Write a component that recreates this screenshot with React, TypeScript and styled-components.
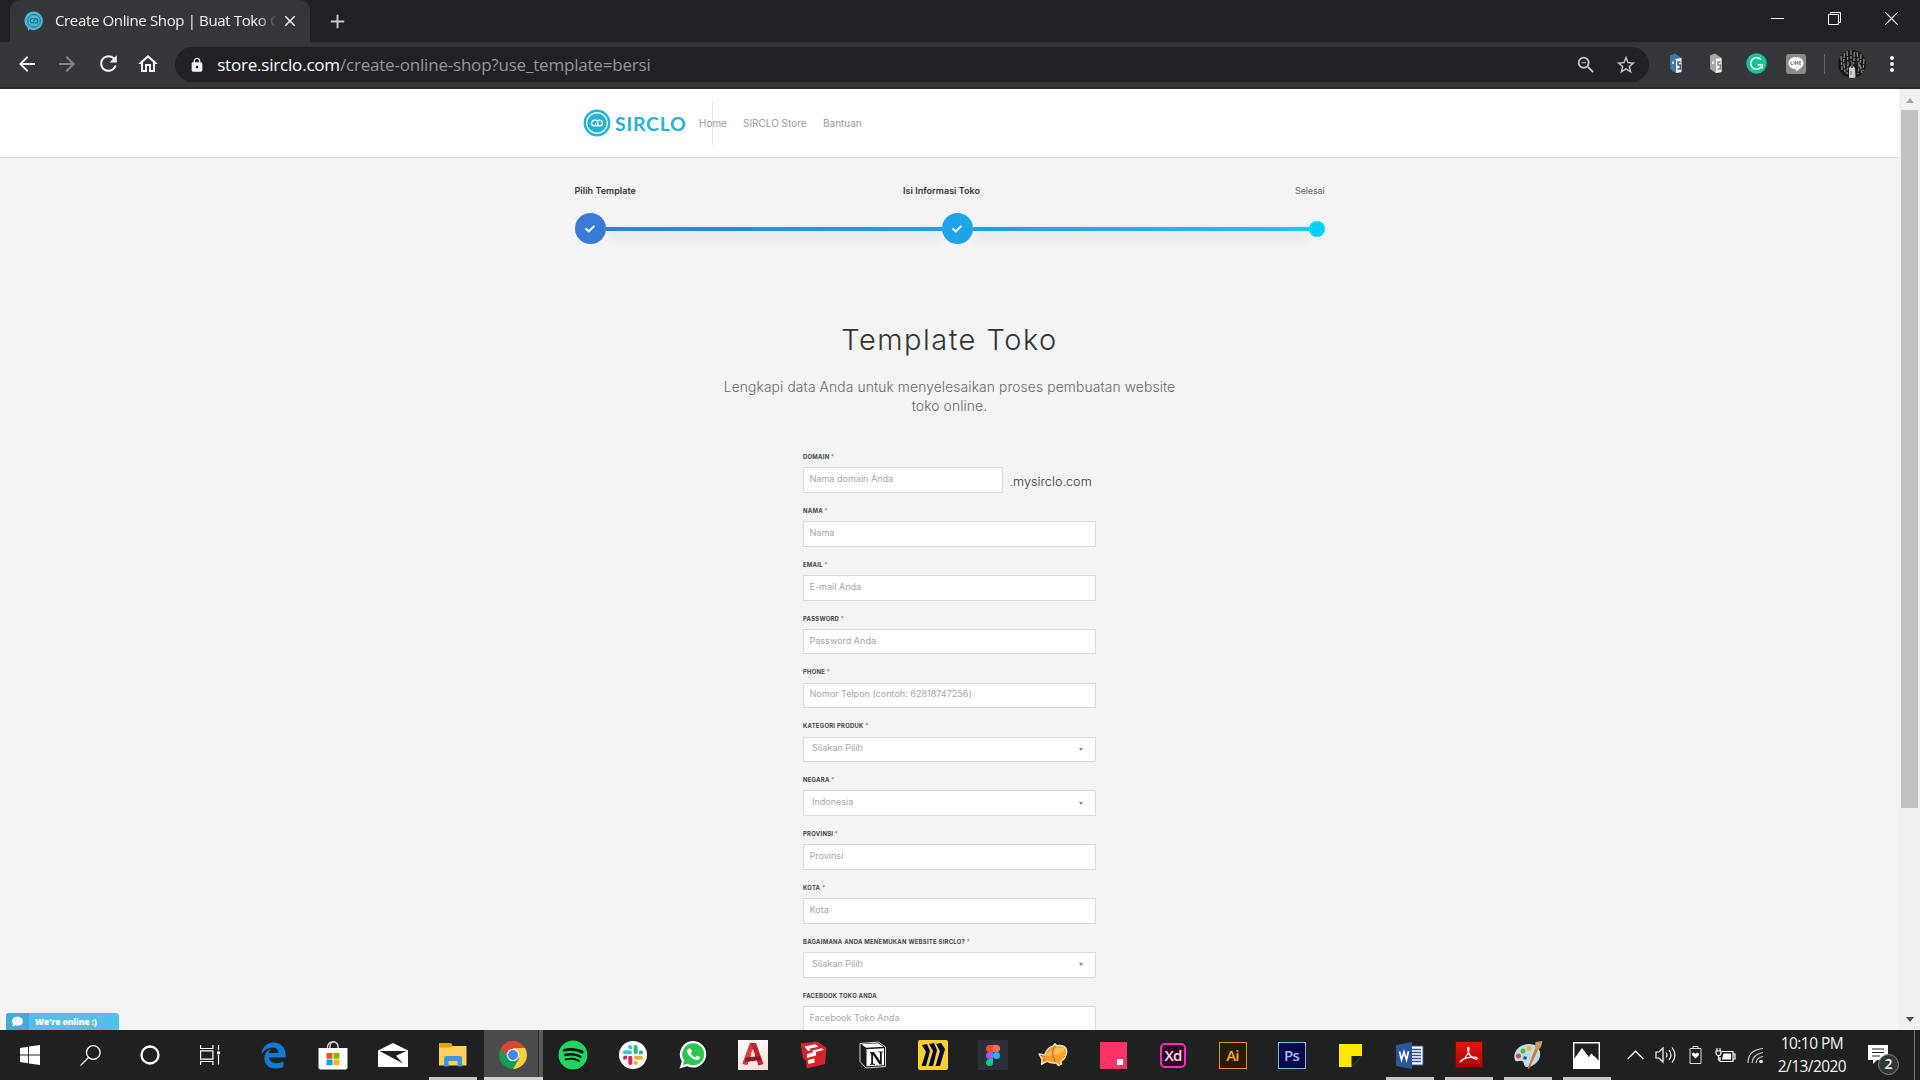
import React from "react";
import styled, { createGlobalStyle, css } from "styled-components";
import { MdArrowBack, MdArrowForward, MdRefresh, MdOutlineHome, MdLock, MdStarBorder, MdOutlineZoomOut, MdClose, MdAdd, MdMoreVert } from "react-icons/md";
import { FaEdgeLegacy, FaSpotify, FaCheck, FaComment } from "react-icons/fa";

const GlobalStyle = createGlobalStyle`
  * { box-sizing: border-box; }
  html, body { margin: 0; padding: 0; overflow: hidden; background: #f3f4f6; }
  svg { display: block; flex: none; }
`;

const pageFont = `Inter, "Liberation Sans", sans-serif`;
const systemFont = `"Open Sans", "Noto Sans", sans-serif`;

const Desktop = styled.div`
  width: 1920px;
  height: 1080px;
  display: flex;
  flex-direction: column;
  overflow: hidden;
  font-family: ${pageFont};
`;

/* ---------- browser chrome ---------- */

const TabStrip = styled.div`
  height: 42px;
  flex: none;
  display: flex;
  background: #202124;
  font-family: ${systemFont};
  padding-left: 10px;
`;

const Tab = styled.div`
  width: 300px;
  height: 42px;
  display: flex;
  align-items: center;
  padding: 0 10px 0 14px;
  border-radius: 10px 10px 0 0;
  background: #35363a;
`;

const TabTitle = styled.div`
  width: 224px;
  margin-left: 11px;
  white-space: nowrap;
  font-size: 15px;
  line-height: 22px;
  letter-spacing: -0.36px;
  color: #f1f3f4;
  margin-top: -2px;
  mask-image: linear-gradient(90deg, #000 202px, transparent 222px);
`;

const TabClose = styled.div`
  margin-left: 2px;
  margin-top: -1px;
  color: #f4f4f4;
`;

const NewTab = styled.div`
  display: flex;
  align-items: center;
  margin-left: 16px;
  color: #c8cacd;
`;

const WindowButtons = styled.div`
  margin-left: auto;
  display: flex;
`;

const WindowButton = styled.div`
  width: 57px;
  height: 37px;
  display: flex;
  align-items: center;
  justify-content: center;
`;

const Toolbar = styled.div`
  height: 47px;
  flex: none;
  display: flex;
  align-items: center;
  background: #35363a;
  border-bottom: 2px solid #28292c;
  padding: 0 16px 2px 15px;
  font-family: ${systemFont};
`;

const NavButton = styled.div<{ $dim?: boolean }>`
  width: 40.3px;
  display: flex;
  color: ${(p) => (p.$dim ? "#85868a" : "#f1f3f4")};
`;

const Omnibox = styled.div`
  width: 1474px;
  height: 35px;
  margin-top: 2px;
  display: flex;
  align-items: center;
  border-radius: 18px;
  background: #202124;
  padding: 0 12px 0 14px;
  margin-left: -1px;
  color: #f1f3f4;
`;

const Url = styled.div`
  margin-left: 12px;
  flex: 1;
  font-size: 17px;
  line-height: 24px;
  letter-spacing: -0.2px;
  white-space: nowrap;
  color: #fff;
  span { color: #94979b; }
`;

const OmniIcons = styled.div`
  display: flex;
  gap: 18px;
  color: #c3c5c9;
`;

const Extensions = styled.div`
  display: flex;
  align-items: center;
  margin-left: 7px;
`;

const ExtSlot = styled.div`
  width: 40px;
  display: flex;
  justify-content: center;
`;

const LineBadge = styled.div`
  width: 20px;
  height: 20px;
  border-radius: 3px;
  background: #8b8b8b;
`;

const ToolbarRule = styled.div`
  width: 1px;
  height: 20px;
  margin: 0 13px 0 8px;
  background: #66676b;
`;

const ToolbarMenu = styled.div`
  margin-left: 14px;
  color: #f1f3f4;
`;

/* ---------- page ---------- */

const Viewport = styled.div`
  height: 941px;
  flex: none;
  display: flex;
  overflow: hidden;
  position: relative;
`;

const Page = styled.div`
  width: 1899px;
  background: #f3f4f6;
  overflow: hidden;
`;

const SiteHeader = styled.header`
  height: 69px;
  background: #fff;
  border-bottom: 1px solid #d9dbdd;
  display: flex;
  align-items: center;
  padding-left: 583px;
`;

const Wordmark = styled.div`
  width: 84px;
  margin: 1px 0 0 4px;
  font-family: Lato, sans-serif;
  font-weight: 700;
  font-size: 19.5px;
  line-height: 24px;
  letter-spacing: 0.75px;
  color: #27b2d2;
  white-space: nowrap;
`;

const SiteNav = styled.nav`
  position: relative;
  display: flex;
  align-items: center;
  height: 43px;
`;

const NavRule = styled.div`
  position: absolute;
  left: 13px;
  top: 0;
  width: 1px;
  height: 43px;
  background: #e4e4e4;
`;

const NavLink = styled.a<{ $width: number }>`
  width: ${(p) => p.$width}px;
  position: relative;
  font-size: 9.9px;
  line-height: 12px;
  letter-spacing: 0.06px;
  color: #999;
  white-space: nowrap;
`;

const Steps = styled.section`
  width: 750px;
  margin-left: 574.5px;
  padding-top: 27px;
`;

const StepLabels = styled.div`
  display: flex;
  justify-content: space-between;
  height: 12px;
  line-height: 12px;
  font-size: 9px;
  color: #555;
`;

const StepLabel = styled.span<{ $active?: boolean; $shift?: number }>`
  font-weight: ${(p) => (p.$active ? 600 : 400)};
  color: ${(p) => (p.$active ? "#333" : "#666")};
  letter-spacing: ${(p) => (p.$active ? "0.04px" : "-0.15px")};
  margin-left: ${(p) => p.$shift || 0}px;
`;

const StepTrack = styled.div`
  display: flex;
  align-items: center;
  height: 31px;
  margin-top: 16px;
`;

const StepDot = styled.div<{ $size: number; $color: string }>`
  width: ${(p) => p.$size}px;
  height: ${(p) => p.$size}px;
  flex: none;
  display: flex;
  align-items: center;
  justify-content: center;
  border-radius: 50%;
  background: ${(p) => p.$color};
  color: #fff;
`;

const StepLine = styled.div<{ $from: string; $to: string }>`
  flex: 1;
  height: 4px;
  background: linear-gradient(90deg, ${(p) => p.$from}, ${(p) => p.$to});
  box-shadow: 0 5px 12px rgba(0, 0, 0, 0.14);
`;

const Intro = styled.section`
  width: 480px;
  margin: 77px auto 0;
  text-align: center;
`;

const Title = styled.h1`
  margin: 0;
  font-weight: 300;
  font-size: 29px;
  line-height: 38px;
  letter-spacing: 1.5px;
  color: #333;
`;

const Subtitle = styled.p`
  margin: 19px 0 0;
  font-weight: 300;
  font-size: 13.8px;
  line-height: 19px;
  letter-spacing: 0.13px;
  color: #666;
`;

const Form = styled.form`
  width: 293px;
  margin: 37px 0 0 803px;
`;

const Field = styled.div`
  height: 53.87px;
`;

const FieldLabel = styled.label`
  display: block;
  height: 14.3px;
  line-height: 8px;
  font-size: 5.9px;
  font-weight: 700;
  letter-spacing: 0.27px;
  color: #444;
  white-space: nowrap;
  em { font-style: normal; color: #f2506a; }
`;

const FieldRow = styled.div`
  display: flex;
  align-items: center;
`;

const Control = styled.div<{ $width?: number; $select?: boolean }>`
  width: ${(p) => p.$width || 293}px;
  height: 25.5px;
  display: flex;
  align-items: center;
  justify-content: space-between;
  border: 1px solid #d8dadc;
  background: #fff;
  padding: 0 12px 2px ${(p) => (p.$select ? 8 : 5.5)}px;
  font-size: 9.1px;
  line-height: 12px;
  letter-spacing: -0.03px;
  color: #a6a6a6;
  white-space: nowrap;
`;

const Caret = styled.i`
  border: 2.5px solid transparent;
  border-top: 3px solid #888;
  border-bottom: 0;
  margin-top: 2px;
`;

const DomainSuffix = styled.span`
  margin: 4px 0 0 6.5px;
  font-weight: 300;
  font-size: 12.7px;
  line-height: 16px;
  color: #333;
`;

const Scrollbar = styled.div`
  width: 21px;
  display: flex;
  flex-direction: column;
  align-items: center;
  background: #f1f1f1;
`;

const ScrollArrow = styled.div<{ $down?: boolean }>`
  height: 21px;
  display: flex;
  align-items: center;
  &::after {
    content: "";
    border: 4.5px solid transparent;
    ${(p) =>
      p.$down
        ? css`border-top: 5px solid #505050; border-bottom: 0;`
        : css`border-bottom: 5px solid #a3a3a3; border-top: 0; margin-top: 2px;`}
  }
`;

const ScrollThumb = styled.div`
  width: 17px;
  height: 698px;
  margin-bottom: auto;
  background: #c1c1c1;
`;

const Chat = styled.div`
  position: absolute;
  left: 6px;
  bottom: 0;
  width: 113px;
  height: 17px;
  display: flex;
  align-items: center;
  overflow: hidden;
  border-radius: 3px 3px 0 0;
  background: #52c0e6;
  color: #fff;
  font-family: ${systemFont};
  font-weight: 800;
  font-size: 8.6px;
  letter-spacing: -0.15px;
`;

const ChatIcon = styled.div`
  width: 23px;
  height: 17px;
  margin-right: 6px;
  display: flex;
  align-items: center;
  justify-content: center;
  background: #3eaed3;
`;

/* ---------- taskbar ---------- */

const Taskbar = styled.div`
  height: 50px;
  flex: none;
  display: flex;
  background: #1f2020;
  color: #fff;
  font-family: ${systemFont};
`;

const StartGroup = styled.div`
  display: flex;
  margin-right: 3px;
`;

const TaskCell = styled.div<{ $width?: number; $running?: boolean; $active?: boolean }>`
  width: ${(p) => p.$width || 60}px;
  height: 50px;
  display: flex;
  align-items: center;
  justify-content: center;
  ${(p) => p.$running && css`background: linear-gradient(#cdc3c3, #cdc3c3) center bottom / 48px 3px no-repeat;`}
  ${(p) =>
    p.$active &&
    css`
      padding-right: 1px;
      background: linear-gradient(#d8cccc, #d8cccc) 1px bottom / 59px 3px no-repeat,
        linear-gradient(90deg, #1f2020 1px, #4b4b4b 1px, #4b4b4b 55px, #2c2c2c 55px, #2c2c2c 56px, #5a5a5a 56px);
    `}
`;

const AdobeTile = styled.div<{ $fg: string; $bg: string; $line: string; $round?: boolean }>`
  width: ${(p) => (p.$round ? 26 : 28)}px;
  height: ${(p) => (p.$round ? 25 : 27)}px;
  border: ${(p) => (p.$round ? 2 : 1.5)}px solid ${(p) => p.$line};
  border-radius: ${(p) => (p.$round ? 5 : 0)}px;
  background: ${(p) => p.$bg};
  color: ${(p) => p.$fg};
  display: flex;
  align-items: center;
  justify-content: center;
  font-weight: 600;
  font-size: 15px;
  line-height: 20px;
  letter-spacing: -0.8px;
  padding-bottom: 1px;
`;

const CadTile = styled.div`
  width: 30px;
  height: 30px;
  background: linear-gradient(160deg, #fff, #f7ddd6);
`;

const MiroTile = styled.div`
  width: 30px;
  height: 30px;
  border-radius: 2px;
  background: #fdd02f;
`;

const FigmaTile = styled.div`
  width: 30px;
  height: 30px;
  display: flex;
  align-items: center;
  justify-content: center;
  background: #2c2f38;
`;

const InvisionTile = styled.div`
  width: 27px;
  height: 27px;
  display: flex;
  align-items: flex-end;
  justify-content: flex-end;
  padding: 4px;
  background: #ff3366;
  &::after { content: ""; width: 6px; height: 6px; background: #fff; }
`;

const Disc = styled.div<{ $size: number; $bg: string }>`
  width: ${(p) => p.$size}px;
  height: ${(p) => p.$size}px;
  display: flex;
  align-items: center;
  justify-content: center;
  border-radius: 50%;
  background: ${(p) => p.$bg};
`;

const EdgeColor = styled.div`
  color: #0f7bd8;
`;

const Tray = styled.div`
  display: flex;
  align-items: center;
  margin-left: 4px;
`;

const TrayCell = styled.div`
  width: 30.2px;
  display: flex;
  justify-content: center;
`;

const Clock = styled.div`
  width: 80px;
  margin-left: 1px;
  text-align: center;
  font-size: 15.5px;
  line-height: 23px;
  letter-spacing: -0.55px;
  white-space: nowrap;
  color: #f4f4f4;
`;

const Notifications = styled.div`
  position: relative;
  width: 40px;
  height: 50px;
  margin-left: 16px;
`;

const NoteIcon = styled.div`
  padding-top: 14px;
`;

const NoteBadge = styled.div`
  position: absolute;
  left: 10px;
  top: 24px;
  width: 21px;
  height: 21px;
  border: 1px solid #888;
  border-radius: 50%;
  background: #333536;
  text-align: center;
  font-size: 14px;
  font-weight: 600;
  line-height: 18px;
`;

const ShowDesktop = styled.div`
  width: 6px;
  height: 50px;
  margin-left: auto;
  border-left: 1px solid #777;
`;

const Favicon = () => (
  <svg width="20" height="20" viewBox="0 0 20 20">
    <path d="M10 0.5a9.3 9.3 0 1 1-4.2 17.8L4 20l-.3-3.2A9.3 9.3 0 0 1 10 .5z" fill="#4bb6d6" />
    <circle cx="10" cy="9.8" r="6.3" fill="none" stroke="#28708a" strokeWidth="1" />
    <path d="M9.300 7.500H8.500a2 2 0 0 0 0 4.500q1.500 0 1.500-2.200t1.500-2.200a2 2 0 0 1 0 4.500h-.8" fill="none" stroke="#1f667f" strokeWidth="1.100" />
  </svg>
);

const BuildingIcon = ({ side, mark }: { side: string; mark: string }) => (
  <svg width="14" height="21" viewBox="0 0 14 21">
    <path d="M1 2.500L6 .5l6.500 4.500v14L7 20l-5.500-4z" fill={side} />
    <path d="M3.500 6.500L12.500 5v14L7.500 20 3.500 16z" fill="#f2f2f2" />
    <path d="M1 2.500l6 4.300V20l-5.500-4z" fill={side} />
    <path d="M11.500 9H9v3h2.300v4H8.500" stroke={mark} strokeWidth="1.400" fill="none" />
    <path d="M4 8.500v2.500" stroke="#fff" strokeWidth="1.500" />
  </svg>
);

const GrammarlyIcon = () => (
  <svg width="21" height="21" viewBox="0 0 21 21">
    <circle cx="10.5" cy="10.5" r="10.300" fill="#15c39a" />
    <path d="M15 6.700A5.800 5.800 0 1 0 15.300 13.800M16.300 15.500v-3.700h-4.500" fill="none" stroke="#fff" strokeWidth="1.600" />
  </svg>
);

const LineIcon = () => (
  <svg width="20" height="20" viewBox="0 0 20 20">
    <path d="M10 3c4.300 0 7.500 2.700 7.500 6.200 0 3.200-4 6-7.500 8.300v-2.300C5.800 15 2.500 12.500 2.500 9.200 2.500 5.700 5.700 3 10 3z" fill="#fff" />
    <path d="M5 7.300v3.200h1.800M8 7v3.700M9.500 10.700V7.400l2 3V7M15 7.500h-1.900v3.100H15M13 9h2" fill="none" stroke="#777" strokeWidth=".9" />
  </svg>
);

const Avatar = () => (
  <svg width="28" height="28" viewBox="0 0 28 28">
    <clipPath id="avatarClip"><circle cx="14" cy="14" r="14" /></clipPath>
    <g clipPath="url(#avatarClip)">
      <rect width="28" height="28" fill="#191919" />
      <path d="M3 6l1 14M6.500 3l-1 9 2 12M9 1l1 13-1 10M13 0v12M16.500 2l-1 12M19 2l2 14-1 8M23 4l-1 11 2 8M26 9l-1 12" stroke="#858585" strokeWidth="1.300" strokeDasharray="5 1 3 1.500" fill="none" />
      <path d="M11 18l3-3 3 3 .5 10h-6.500z" fill="#cfcfcf" />
      <path d="M14 12v6" stroke="#555" strokeWidth="2" />
      <path d="M13 21v4" stroke="#777" strokeWidth="1" />
    </g>
  </svg>
);

const SircloLogo = () => (
  <svg width="28" height="28" viewBox="0 0 28 28">
    <circle cx="14" cy="14" r="13.400" fill="#27b2d2" />
    <circle cx="14" cy="14" r="10.300" fill="none" stroke="#e3f8fb" strokeWidth="1.400" />
    <path d="M12.500 16.900h-1a2.900 2.900 0 0 1 0-5.800h1.500q1.700 0 1.700 2v1.500q0 2.300 1.800 2.300a2.900 2.900 0 0 0 0-5.800h-1.500" fill="none" stroke="#fff" strokeWidth="1.400" />
    <path d="M15.300 16.900h-1.300q-1.500 0-1.500-2v-1" fill="none" stroke="#fff" strokeWidth="1.100" />
  </svg>
);

const StartIcon = () => (
  <svg width="20" height="20" viewBox="0 0 20 20" fill="#fff">
    <path d="M0 2.900l8.100-1.200v7.800H0zM9 1.500L20 0v9.500H9zM0 10.500h8.100v7.800L0 17.100zM9 10.500h11V20L9 18.500z" />
  </svg>
);

const SearchIcon = () => (
  <svg width="21" height="21" viewBox="0 0 21 21" fill="none" stroke="#fff" strokeWidth="1.300">
    <circle cx="13.300" cy="7.500" r="6.800" />
    <path d="M8.500 12.500L.5 20.500" />
  </svg>
);

const CortanaIcon = () => (
  <svg width="20" height="20" viewBox="0 0 20 20">
    <circle cx="10" cy="10" r="8.500" fill="none" stroke="#fff" strokeWidth="2.300" />
  </svg>
);

const TaskViewIcon = () => (
  <svg width="21" height="20" viewBox="0 0 21 20" fill="none" stroke="#fff" strokeWidth="1.200">
    <path d="M.6 0v3.500h12.300V0M.6 5.800h12.300v8.400H.6zM.6 20v-3.500h12.300V20M18.500 0v5M18.500 10v9.500" />
    <rect x="17" y="6.300" width="3" height="3" fill="#fff" stroke="none" />
  </svg>
);

const StoreIcon = () => (
  <svg width="30" height="30" viewBox="0 0 30 30">
    <path d="M9.500 9V7a5.300 5.300 0 0 1 10.600 0v2M12 8V6a4 4 0 0 1 8 0" fill="none" stroke="#d0d0d0" strokeWidth="1.400" />
    <path d="M.5 8h29v20l-1.500 1.500h-26L.5 28z" fill="#fff" />
    <path d="M8.500 13h6v5.700h-6z" fill="#f25022" />
    <path d="M15.500 13h6v5.700h-6z" fill="#7fba00" />
    <path d="M8.500 19.500h6v5.700h-6z" fill="#00a4ef" />
    <path d="M15.500 19.500h6v5.700h-6z" fill="#ffb900" />
  </svg>
);

const MailIcon = () => (
  <svg width="30" height="24" viewBox="0 0 30 24">
    <path d="M0 7.500L15 0l15 7.500V24H0z" fill="#fff" />
    <path d="M1.500 8h27L18 12.800l7 7.700L1.500 8z" fill="#1f2020" />
  </svg>
);

const ExplorerIcon = () => (
  <svg width="28" height="24" viewBox="0 0 28 24">
    <path d="M0 1h11l2 2h14.500v19.500H0z" fill="#fbd15b" />
    <path d="M0 0h12l1.500 2L12 4.500H0z" fill="#e39c1c" />
    <path d="M5 23.500v-8q0-2.500 2.500-2.500h13q2.500 0 2.500 2.500v8h-4.500V18h-9v5.500z" fill="#3d95dd" />
  </svg>
);

const ChromeIcon = () => (
  <svg width="28" height="28" viewBox="0 0 28 28">
    <path d="M14 14L1.900 7A14 14 0 0 1 26.100 7z" fill="#db4437" />
    <path d="M14 14L1.900 7A14 14 0 0 0 14 28l6.100-10.500z" fill="#0f9d58" />
    <path d="M20.100 17.500L14 28A14 14 0 0 0 26.100 7H14z" fill="#ffcd40" />
    <path d="M1.900 7A14 14 0 0 1 26.100 7H14a7 7 0 0 0-6.500 4.500L7.900 17.500z" fill="#db4437" />
    <circle cx="14" cy="14" r="6.300" fill="#f1f1f1" />
    <circle cx="14" cy="14" r="5" fill="#4285f4" />
  </svg>
);

const SlackIcon = () => (
  <svg width="20" height="20" viewBox="0 0 20 20">
    <g fill="#36c5f0"><rect x="0" y="5.300" width="9" height="4" rx="2" /><path d="M9 4H7a2 2 0 1 1 2-2z" /></g>
    <g fill="#2eb67d"><rect x="10.700" y="0" width="4" height="9.300" rx="2" /><path d="M16 9.300v-2a2 2 0 1 1 2 2z" /></g>
    <g fill="#ecb22e"><rect x="11" y="10.700" width="9" height="4" rx="2" /><path d="M11 16h2a2 2 0 1 1-2 2z" /></g>
    <g fill="#e01e5a"><rect x="5.300" y="10.700" width="4" height="9.300" rx="2" /><path d="M4 10.700v2a2 2 0 1 1-2-2z" /></g>
  </svg>
);

const WhatsappLogo = () => (
  <svg width="28" height="28" viewBox="0 0 28 28">
    <path d="M14.500 0A13.300 13.300 0 1 1 8 25.200L.5 27.500l2.300-7.300A13.300 13.300 0 0 1 14.500 0z" fill="#fff" />
    <path d="M14.500 2.300A11 11 0 1 1 8.500 22.700l-4.700 1.400 1.500-4.500A11 11 0 0 1 14.500 2.300z" fill="#2cc64f" />
    <path d="M10.300 7.500l1.500.2 1.200 3-1.200 1.700a9 9 0 0 0 4.500 4l1.600-1.900 3 1.400c.3 2-1.400 3.200-2.900 3.200-4.500-.5-9.500-5-10-9 0-1.200.9-2.500 2.300-2.600z" fill="#fff" />
  </svg>
);

const CadIcon = () => (
  <svg width="30" height="30" viewBox="0 0 30 30">
    <path d="M12 3h6l7.500 21-5 1.500L15 10 9 25l-4.500-1.300z" fill="#b9252b" />
    <path d="M12 3l3 7-6 15-4.500-1.300z" fill="#d5434a" />
    <path d="M8 17.500l14-1.500 1.500 4L6.500 22z" fill="#8e1a20" />
    <path d="M12.700 14l2.300-5 2 5.500z" fill="#f6ddd8" />
  </svg>
);

const SketchupIcon = () => (
  <svg width="27" height="28" viewBox="0 0 27 28">
    <path d="M.5 2.500L17.500.5l9 6.500-1.500 16L6.500 27.500 6 19.500l-3-2z" fill="#d8232a" />
    <path d="M4.500 5.500L15 3.300l3.500 2.500-9.500 2 2 1.500-3 .7z" fill="#fff" />
    <path d="M12.500 9.500l9-2.300 2.500 1.600-8 2.200 0 3.500-3.500 1-5.500 1.300V13l5.500-1.500z" fill="#fff" />
    <path d="M8 19l6.500-1.500v4L8.500 23z" fill="#fff" />
  </svg>
);

const NotionIcon = () => (
  <svg width="28" height="28" viewBox="0 0 28 28">
    <path d="M1 2.500L19.500 1l7 5v19.500L7 27 1 20.500z" fill="#191919" stroke="#d8d8d8" strokeWidth="1" />
    <path d="M2.500 3.300L19 2.200l5.500 3.500L7 6.800z" fill="#fff" />
    <path d="M7.500 8.300l17.500-1.100v17L7.500 25.300z" fill="#fff" />
    <path d="M11 11h4l6 9v-8.500l-1.800-.3V10.500h5v.8l-1.400.3v12h-2.300L14 13.800v8.700l2 .5v.7h-5v-.7l1.200-.5v-10L11 12z" fill="#151515" />
  </svg>
);

const MiroIcon = () => (
  <svg width="30" height="30" viewBox="0 0 30 30" fill="#06053b">
    <path d="M4 5l5-1 3 7-4 15H3.500L8 12zM11 4l5-1 3 7-4 16h-4.500L15 11zM18 4l5-1 4 6-5 17h-4.500L22 11z" />
  </svg>
);

const FigmaIcon = () => (
  <svg width="14" height="21" viewBox="0 0 14 21">
    <path d="M7 0H3.500a3.500 3.500 0 0 0 0 7H7z" fill="#f24e1e" />
    <path d="M7 0h3.500a3.500 3.500 0 0 1 0 7H7z" fill="#ff7262" />
    <path d="M7 7H3.500a3.500 3.500 0 0 0 0 7H7z" fill="#a259ff" />
    <circle cx="10.500" cy="10.500" r="3.500" fill="#1abcfe" />
    <path d="M7 14H3.500A3.500 3.500 0 1 0 7 17.500z" fill="#0acf83" />
  </svg>
);

const ZeplinIcon = () => (
  <svg width="30" height="24" viewBox="0 0 30 24">
    <path d="M1 11l5.500 1C9 6 13 3.500 15 3.200L17 .7l1.500 2C24 1.500 29 3.500 28.700 9c-.5 6-4 8.500-6 9.500l1 2.500-3.200 1.500-2.500-2.500c-4 .5-7-.5-9-1.700L3.500 21.500l.5-5z" fill="#f9a12b" stroke="#fbeedf" strokeWidth="1.300" strokeLinejoin="round" />
    <path d="M8 12.500C13 5.500 20 3.500 27.300 5c-3 5.500-10 8.500-19.300 7.500z" fill="#ffc154" />
    <path d="M16.500 3.500q-4 7 1 15.500M2.500 12l4.500 1.500M5 18l3-1.500" stroke="#dd5f2c" strokeWidth="1.300" fill="none" />
  </svg>
);

const StickyIcon = () => (
  <svg width="23" height="23" viewBox="0 0 23 23">
    <path d="M0 0h23v12L12.500 23H0z" fill="#fee902" />
    <path d="M12.500 12H23L12.500 23z" fill="#1c1c14" />
  </svg>
);

const WordIcon = () => (
  <svg width="28" height="27" viewBox="0 0 28 27">
    <path d="M14 4h13v19H14z" fill="#fff" stroke="#2b579a" />
    <path d="M16 7.500h9M16 10.500h9M16 13.500h9M16 16.500h9M16 19.500h9" stroke="#2b579a" strokeWidth="1.300" />
    <path d="M0 3l16-3v27L0 24z" fill="#2b579a" />
    <path d="M3.500 9.500l2 8.300 2.500-8 2.500 8 2-8.500" fill="none" stroke="#fff" strokeWidth="1.700" />
  </svg>
);

const AcrobatIcon = () => (
  <svg width="28" height="28" viewBox="0 0 28 28">
    <defs><linearGradient id="pdf" x2="0" y2="1"><stop stopColor="#e8150f" /><stop offset="1" stopColor="#a70404" /></linearGradient></defs>
    <path d="M.5.5h27v26H.5z" fill="url(#pdf)" stroke="#6d0b08" />
    <path d="M6 20c3-1 7-6 8-11 .5-4-2-3-1.300 0C14 14 17 17 20 18c3 .5 3-1.500 0-1.800C15 16 10 17 6.500 19.200c-2 1.300-1.500 2.500 0 .8z" fill="none" stroke="#fff" strokeWidth="1.200" />
  </svg>
);

const PaintIcon = () => (
  <svg width="30" height="28" viewBox="0 0 30 28">
    <path d="M2 19C-1 12 6 3 16 3c8 0 12 5 11 12-1 6-7 11-13 11-4 0-2-5-5-6-2-1-6 2-7-1z" fill="#bcdcef" />
    <circle cx="5.500" cy="15" r="2.500" fill="#e2443e" />
    <circle cx="10" cy="10" r="2.500" fill="#54b848" />
    <circle cx="16" cy="7.500" r="2.500" fill="#f2b431" />
    <circle cx="12" cy="17" r="1.800" fill="#234a72" />
    <path d="M22 7.500l-7.500 20 1.500.5L25 9z" fill="#d9762b" />
    <path d="M22.500 1l7-1-1.500 6-3 3-3-1.500z" fill="#c99a67" />
  </svg>
);

const PhotosIcon = () => (
  <svg width="27" height="27" viewBox="0 0 27 27">
    <path d="M.7.700h25.600v25.600H.7z" fill="#1f2020" stroke="#fff" strokeWidth="1.400" />
    <path d="M1 17l8-11 7 9 2.500-4L26 19v7.500H1z" fill="#fff" />
    <path d="M15.500 14.500l2.500-4 3 3.500" fill="none" stroke="#222" strokeWidth=".8" />
  </svg>
);

const fields: { label: string; text: string; required?: boolean; select?: boolean; suffix?: string }[] = [
  { label: "DOMAIN", text: "Nama domain Anda", required: true, suffix: ".mysirclo.com" },
  { label: "NAMA", text: "Nama", required: true },
  { label: "EMAIL", text: "E-mail Anda", required: true },
  { label: "PASSWORD", text: "Password Anda", required: true },
  { label: "PHONE", text: "Nomor Telpon (contoh: 62818747256)", required: true },
  { label: "KATEGORI PRODUK", text: "Silakan Pilih", required: true, select: true },
  { label: "NEGARA", text: "Indonesia", required: true, select: true },
  { label: "PROVINSI", text: "Provinsi", required: true },
  { label: "KOTA", text: "Kota", required: true },
  { label: "BAGAIMANA ANDA MENEMUKAN WEBSITE SIRCLO?", text: "Silakan Pilih", required: true, select: true },
  { label: "FACEBOOK TOKO ANDA", text: "Facebook Toko Anda" },
];

const BrowserChrome = () => (
  <>
    <TabStrip>
      <Tab>
        <Favicon />
        <TabTitle>Create Online Shop | Buat Toko C</TabTitle>
        <TabClose><MdClose size={18} /></TabClose>
      </Tab>
      <NewTab><MdAdd size={23} /></NewTab>
      <WindowButtons>
        <WindowButton><svg width="13" height="2"><path d="M0 .5h13" stroke="#fff" /></svg></WindowButton>
        <WindowButton>
          <svg width="13" height="13" fill="none" stroke="#fff"><path d="M.5 2.500h10v10H.5zM2.500 2.500v-2h10v10h-2" /></svg>
        </WindowButton>
        <WindowButton>
          <svg width="13" height="13" stroke="#fff" strokeWidth="1.200"><path d="M0 0l13 13M13 0L0 13" /></svg>
        </WindowButton>
      </WindowButtons>
    </TabStrip>
    <Toolbar>
      <NavButton><MdArrowBack size={24} /></NavButton>
      <NavButton $dim><MdArrowForward size={24} /></NavButton>
      <NavButton><MdRefresh size={25} /></NavButton>
      <NavButton><MdOutlineHome size={24} /></NavButton>
      <Omnibox>
        <MdLock size={16} />
        <Url>store.sirclo.com<span>/create-online-shop?use_template=bersi</span></Url>
        <OmniIcons>
          <MdOutlineZoomOut size={22} />
          <MdStarBorder size={22} />
        </OmniIcons>
      </Omnibox>
      <Extensions>
        <ExtSlot><BuildingIcon side="#3e78b5" mark="#2f62a0" /></ExtSlot>
        <ExtSlot><BuildingIcon side="#a9a9a9" mark="#8a8a8a" /></ExtSlot>
        <ExtSlot><GrammarlyIcon /></ExtSlot>
        <ExtSlot><LineBadge><LineIcon /></LineBadge></ExtSlot>
      </Extensions>
      <ToolbarRule />
      <Avatar />
      <ToolbarMenu><MdMoreVert size={24} /></ToolbarMenu>
    </Toolbar>
  </>
);

const SystemTray = () => (
  <Tray>
    <TrayCell><svg width="17" height="10" fill="none" stroke="#fff" strokeWidth="1.300"><path d="M.7 9L8.500 1.200 16.300 9" /></svg></TrayCell>
    <TrayCell>
      <svg width="21" height="18" fill="none" stroke="#fff" strokeWidth="1.200">
        <path d="M1 6h3l4-4v14l-4-4H1zM11 6.500q2 2.500 0 5M14 4q4 5 0 10M17 1.500q6 7.500 0 15" />
      </svg>
    </TrayCell>
    <TrayCell>
      <svg width="13" height="18" fill="none" stroke="#ddd">
        <path d="M1 2.500h11v15H1zM4 2.500v-2h5v2" />
        <path d="M6.500 12.500L3 9q0-2.500 2-2.300l1.500 1 1.500-1q2-.2 2 2.300z" fill="#fff" stroke="none" />
      </svg>
    </TrayCell>
    <TrayCell>
      <svg width="21" height="15" fill="none" stroke="#fff" strokeWidth="1.200">
        <path d="M7 3.500h11v10H5V9M18.500 6h1.500v5h-1.500M1 3h5v2Q6 7.500 3.500 7.500 1 7.500 1 5zM2 3V0M5 3V0M3.500 7v5H5" />
        <path d="M8.500 5.500H16v6H7z" fill="#fff" stroke="none" />
      </svg>
    </TrayCell>
    <TrayCell>
      <svg width="17" height="17" fill="none" stroke="#ccc" strokeWidth="1.200">
        <path d="M1 16Q1 3 16 1.500M5 16Q6 7 16 5.500M9 16q.5-5.500 7-6.500" />
        <circle cx="14" cy="14.500" r="1.800" fill="#fff" stroke="none" />
      </svg>
    </TrayCell>
    <Clock>10:10 PM<br />2/13/2020</Clock>
    <Notifications>
      <NoteIcon>
        <svg width="21" height="20">
          <path d="M0 1h20v15H9l-4 4v-4H0z" fill="#fff" />
          <path d="M4 5h12M4 8.500h12M4 12h8" stroke="#222" strokeWidth="1.200" />
        </svg>
      </NoteIcon>
      <NoteBadge>2</NoteBadge>
    </Notifications>
  </Tray>
);

export default function App() {
  return (
    <Desktop>
      <GlobalStyle />
      <BrowserChrome />
      <Viewport>
        <Page>
          <SiteHeader>
            <SircloLogo />
            <Wordmark>SIRCLO</Wordmark>
            <SiteNav>
              <NavRule />
              <NavLink $width={44}>Home</NavLink>
              <NavLink $width={80}>SIRCLO Store</NavLink>
              <NavLink $width={50}>Bantuan</NavLink>
            </SiteNav>
          </SiteHeader>
          <Steps>
            <StepLabels>
              <StepLabel $active>Pilih Template</StepLabel>
              <StepLabel $active $shift={-48}>Isi Informasi Toko</StepLabel>
              <StepLabel>Selesai</StepLabel>
            </StepLabels>
            <StepTrack>
              <StepDot $size={31} $color="#3b7bd8"><FaCheck size={10} /></StepDot>
              <StepLine $from="#3b7bd0" $to="#27a0dc" />
              <StepDot $size={31} $color="#1fa4e9"><FaCheck size={10} /></StepDot>
              <StepLine $from="#229fdc" $to="#10ccf5" />
              <StepDot $size={16} $color="#00d2ff" />
            </StepTrack>
          </Steps>
          <Intro>
            <Title>Template Toko</Title>
            <Subtitle>Lengkapi data Anda untuk menyelesaikan proses pembuatan website<br />toko online.</Subtitle>
          </Intro>
          <Form>
            {fields.map((f) => (
              <Field key={f.label}>
                <FieldLabel>{f.label}{f.required && <em> *</em>}</FieldLabel>
                <FieldRow>
                  <Control $width={f.suffix ? 200 : 293} $select={f.select}>
                    {f.text}
                    {f.select && <Caret />}
                  </Control>
                  {f.suffix && <DomainSuffix>{f.suffix}</DomainSuffix>}
                </FieldRow>
              </Field>
            ))}
          </Form>
        </Page>
        <Scrollbar>
          <ScrollArrow />
          <ScrollThumb />
          <ScrollArrow $down />
        </Scrollbar>
        <Chat>
          <ChatIcon><FaComment size={11} /></ChatIcon>
          We're online :)
        </Chat>
      </Viewport>
      <Taskbar>
        <StartGroup>
          <TaskCell><StartIcon /></TaskCell>
          <TaskCell><SearchIcon /></TaskCell>
          <TaskCell><CortanaIcon /></TaskCell>
          <TaskCell><TaskViewIcon /></TaskCell>
        </StartGroup>
        <TaskCell><EdgeColor><FaEdgeLegacy size={27} /></EdgeColor></TaskCell>
        <TaskCell><StoreIcon /></TaskCell>
        <TaskCell><MailIcon /></TaskCell>
        <TaskCell $running><ExplorerIcon /></TaskCell>
        <TaskCell $active><ChromeIcon /></TaskCell>
        <TaskCell><Disc $size={29} $bg="#0b0b0b"><FaSpotify size={30} color="#1ed760" /></Disc></TaskCell>
        <TaskCell><Disc $size={28} $bg="#fff"><SlackIcon /></Disc></TaskCell>
        <TaskCell><WhatsappLogo /></TaskCell>
        <TaskCell><CadTile><CadIcon /></CadTile></TaskCell>
        <TaskCell><SketchupIcon /></TaskCell>
        <TaskCell><NotionIcon /></TaskCell>
        <TaskCell><MiroTile><MiroIcon /></MiroTile></TaskCell>
        <TaskCell><FigmaTile><FigmaIcon /></FigmaTile></TaskCell>
        <TaskCell><ZeplinIcon /></TaskCell>
        <TaskCell><InvisionTile /></TaskCell>
        <TaskCell><AdobeTile $round $fg="#ffd9f5" $bg="#2e001e" $line="#ff2bc2">Xd</AdobeTile></TaskCell>
        <TaskCell $width={59}><AdobeTile $fg="#f9a63a" $bg="#291a04" $line="#d9933a">Ai</AdobeTile></TaskCell>
        <TaskCell $width={59}><AdobeTile $fg="#8cc3f7" $bg="#0c0547" $line="#7fb2e0">Ps</AdobeTile></TaskCell>
        <TaskCell $width={59}><StickyIcon /></TaskCell>
        <TaskCell $width={59} $running><WordIcon /></TaskCell>
        <TaskCell $width={59} $running><AcrobatIcon /></TaskCell>
        <TaskCell $width={59} $running><PaintIcon /></TaskCell>
        <TaskCell $width={59} $running><PhotosIcon /></TaskCell>
        <SystemTray />
        <ShowDesktop />
      </Taskbar>
    </Desktop>
  );
}
